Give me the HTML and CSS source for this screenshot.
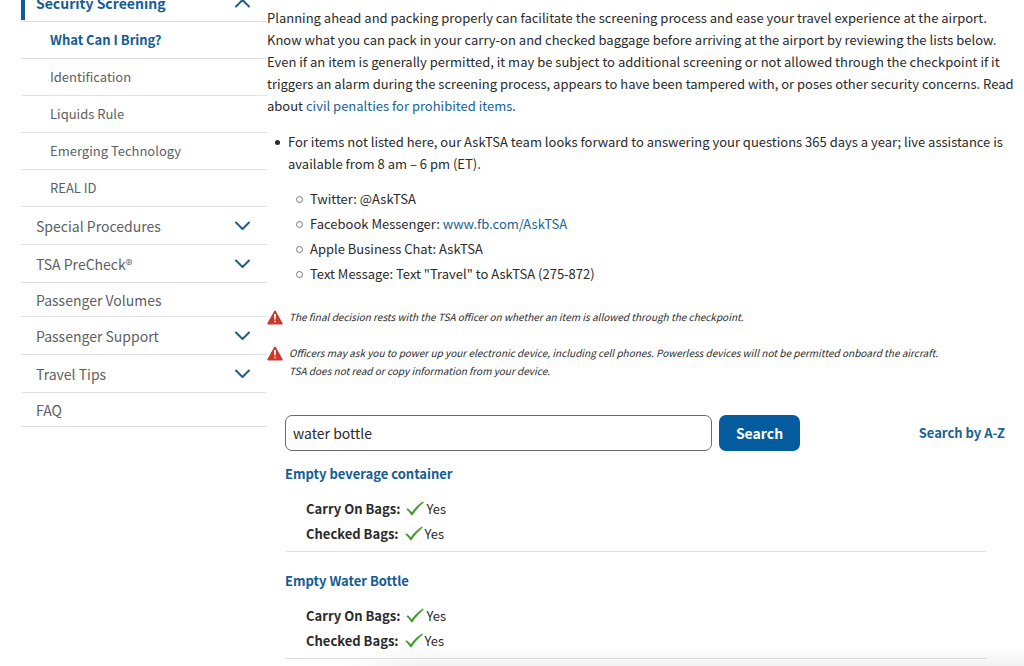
FILE: index.html
```html
<!DOCTYPE html>
<html lang="en">
<head>
    <meta charset="UTF-8">
    <meta name="viewport" content="width=device-width, initial-scale=1.0">
    <title>What Can I Bring? | Transportation Security Administration</title>
    <link rel="stylesheet" href="styles.css">
</head>
<body>
    <svg class="sprite" aria-hidden="true">
        <symbol id="chevron" viewBox="0 0 15 10">
            <path d="M1 1.5 L7.5 8 L14 1.5" fill="none" stroke="currentColor" stroke-width="2" stroke-linecap="round" stroke-linejoin="round"/>
        </symbol>
        <symbol id="check" viewBox="0 0 18 15">
            <path d="M0.4 8.6 L1.8 7.2 C3.4 8.4 4.7 9.7 5.8 11.2 C9 7 12.6 3.4 17 0.6 L17.8 1.6 C13.2 5.4 9.6 9.4 6.4 14.2 L5.2 14.2 C4 12.2 2.5 10.2 0.4 8.6 Z" fill="#46992f"/>
        </symbol>
        <symbol id="warning" viewBox="0 0 16 15">
            <path d="M8 1.4 L14.8 13.6 H1.2 Z" fill="#cb3a2e" stroke="#cb3a2e" stroke-width="1.8" stroke-linejoin="round"/>
            <path d="M7 4 H9 L8.7 9.6 H7.3 Z" fill="#fff"/>
            <circle cx="8" cy="11.6" r="1" fill="#f3c4be"/>
        </symbol>
    </svg>

    <div class="page">
        <nav class="side-nav">
            <ul>
                <li class="parent open">
                    <a href="#">Security Screening</a>
                    <svg class="chevron up"><use href="#chevron"/></svg>
                </li>
                <li class="child active"><a href="#">What Can I Bring?</a></li>
                <li class="child"><a href="#">Identification</a></li>
                <li class="child"><a href="#">Liquids Rule</a></li>
                <li class="child"><a href="#">Emerging Technology</a></li>
                <li class="child"><a href="#">REAL ID</a></li>
                <li class="parent">
                    <a href="#">Special Procedures</a>
                    <svg class="chevron"><use href="#chevron"/></svg>
                </li>
                <li class="parent">
                    <a href="#">TSA PreCheck®</a>
                    <svg class="chevron"><use href="#chevron"/></svg>
                </li>
                <li><a href="#">Passenger Volumes</a></li>
                <li class="parent">
                    <a href="#">Passenger Support</a>
                    <svg class="chevron"><use href="#chevron"/></svg>
                </li>
                <li class="parent">
                    <a href="#">Travel Tips</a>
                    <svg class="chevron"><use href="#chevron"/></svg>
                </li>
                <li><a href="#">FAQ</a></li>
            </ul>
        </nav>

        <main>
            <p class="intro">Planning ahead and packing properly can facilitate the screening process and ease your travel experience at the airport. Know what you can pack in your carry-on and checked baggage before arriving at the airport by reviewing the lists below. Even if an item is generally permitted, it may be subject to additional screening or not allowed through the checkpoint if it triggers an alarm during the screening process, appears to have been tampered with, or poses other security concerns. Read about <a href="#">civil penalties for prohibited items</a>.</p>

            <ul class="ask">
                <li>For items not listed here, our AskTSA team looks forward to answering your questions 365 days a year; live assistance is available from 8 am – 6 pm (ET).
                    <ul class="contacts">
                        <li>Twitter: @AskTSA</li>
                        <li>Facebook Messenger: <a href="#">www.fb.com/AskTSA</a></li>
                        <li>Apple Business Chat: AskTSA</li>
                        <li>Text Message: Text "Travel" to AskTSA (275-872)</li>
                    </ul>
                </li>
            </ul>

            <div class="notice">
                <svg class="warning"><use href="#warning"/></svg>
                <p>The final decision rests with the TSA officer on whether an item is allowed through the checkpoint.</p>
            </div>
            <div class="notice">
                <svg class="warning"><use href="#warning"/></svg>
                <p>Officers may ask you to power up your electronic device, including cell phones. Powerless devices will not be permitted onboard the aircraft.<br>TSA does not read or copy information from your device.</p>
            </div>

            <form class="search">
                <input type="text" value="water bottle" aria-label="Search items">
                <button type="submit">Search</button>
                <a href="#">Search by A-Z</a>
            </form>

            <section class="result">
                <h2><a href="#">Empty beverage container</a></h2>
                <p><strong>Carry On Bags:</strong><svg class="check"><use href="#check"/></svg>Yes</p>
                <p><strong>Checked Bags:</strong><svg class="check"><use href="#check"/></svg>Yes</p>
            </section>
            <section class="result">
                <h2><a href="#">Empty Water Bottle</a></h2>
                <p><strong>Carry On Bags:</strong><svg class="check"><use href="#check"/></svg>Yes</p>
                <p><strong>Checked Bags:</strong><svg class="check"><use href="#check"/></svg>Yes</p>
            </section>
        </main>
    </div>
    <div class="bottom-fade"></div>
</body>
</html>
```

FILE: styles.css
```css
* {
    box-sizing: border-box;
}
body {
    margin: 0;
    font-family: "Source Sans Pro", "Noto Sans CJK SC", sans-serif;
    font-size: 13px;
    line-height: 22px;
    color: #2a2a2a;
    background-color: #fff;
}
a {
    color: #1a6295;
    text-decoration: none;
}
a:hover {
    text-decoration: underline;
}
ul, p, h2 {
    margin: 0;
    padding: 0;
}
ul {
    list-style: none;
}
.sprite {
    display: none;
}
.page {
    display: flex;
    padding: 0 6px 0 21px;
}

/* side navigation */
.side-nav {
    flex: 0 0 246px;
    margin-top: -16px;
    font-size: 14px;
}
.side-nav li {
    display: flex;
    justify-content: space-between;
    align-items: center;
    height: 34px;
    padding: 0 17px 0 15px;
    border-bottom: 1px solid #e2e2e2;
}
.side-nav a {
    color: #5c5f63;
}
.side-nav .parent {
    height: 38px;
}
.side-nav .child {
    height: 37px;
    padding-left: 29px;
    font-size: 13px;
}
.side-nav .open {
    padding-left: 0;
}
.side-nav .open a {
    padding: 6px 0 6px 11px;
    border-left: 4px solid #145c94;
    color: #145c94;
    font-weight: bold;
}
.side-nav .active a {
    color: #145c94;
    font-weight: bold;
}
.chevron {
    width: 15px;
    height: 10px;
    color: #205d87;
}
.chevron.up {
    transform: rotate(180deg);
}

/* content */
main {
    flex: 1;
    min-width: 0;
    padding-top: 7px;
}
.ask {
    margin-top: 14px;
    padding-left: 21px;
}
.ask li::before {
    content: "";
    display: inline-block;
    width: 5px;
    height: 5px;
    margin: 0 8px 2px -13px;
    border-radius: 50%;
    background-color: #2a2a2a;
}
.contacts {
    margin-top: 11px;
    padding-left: 21px;
    line-height: 25px;
}
.contacts li::before {
    margin-right: 7px;
    margin-bottom: 1px;
    border: 1px solid #777;
    background-color: transparent;
}
.notice {
    display: flex;
    gap: 6px;
    margin-top: 18px;
    font-size: 10px;
    font-style: italic;
    line-height: 18px;
}
.ask + .notice {
    margin-top: 22px;
}
.warning {
    flex: none;
    width: 16px;
    height: 15px;
    margin-top: 2px;
}

/* search */
.search {
    display: flex;
    align-items: center;
    gap: 7px;
    margin: 35px 13px 12px 18px;
}
.search input {
    flex: 0 1 427px;
    min-width: 0;
    height: 36px;
    padding: 0 7px;
    border: 1px solid #6b6b6b;
    border-radius: 7px;
    font: inherit;
    font-size: 14px;
    color: #2a2a2a;
}
.search button {
    width: 81px;
    height: 36px;
    border: none;
    border-radius: 7px;
    background-color: #045c9f;
    color: #fff;
    font: inherit;
    font-size: 14px;
    font-weight: bold;
    cursor: pointer;
}
.search a {
    margin-left: auto;
    font-weight: bold;
}

/* results */
.result {
    margin: 0 31px 18px 18px;
    padding-bottom: 5px;
    border-bottom: 1px solid #e2e2e2;
}
.result h2 {
    margin-bottom: 11px;
    font-size: 13px;
}
.result h2 a {
    color: #145c94;
}
.result p {
    display: flex;
    align-items: center;
    padding-left: 21px;
    line-height: 25px;
}
.result:last-child {
    margin-bottom: 0;
}
.check {
    width: 18px;
    height: 15px;
    margin: 0 2px 0 6px;
}
.bottom-fade {
    position: fixed;
    right: 0;
    bottom: 0;
    left: 340px;
    height: 20px;
    background: linear-gradient(to bottom, rgba(0,0,0,0), rgba(0,0,0,0.05));
    -webkit-mask-image: linear-gradient(to right, transparent, #000 80px);
    mask-image: linear-gradient(to right, transparent, #000 80px);
    pointer-events: none;
}
```
